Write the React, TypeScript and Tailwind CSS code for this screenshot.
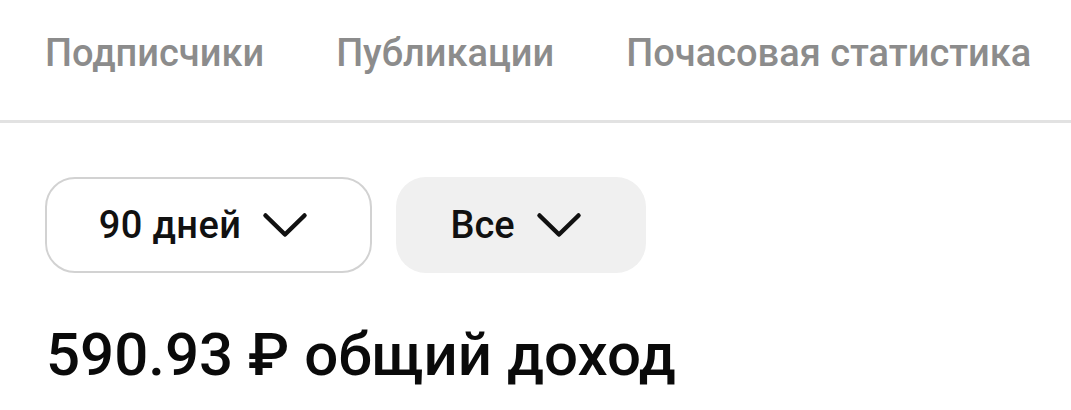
import React from "react";

function Chevron() {
  return (
    <svg width="46" height="26" viewBox="0 0 46 26" fill="none" className="shrink-0">
      <path d="M3.5 3.5 L23 22.5 L42.5 3.5" stroke="#111" strokeWidth="4.5" strokeLinecap="round" strokeLinejoin="round" />
    </svg>
  );
}

export default function App() {
  return (
    <div className="w-[1071px] h-[410px] bg-white overflow-hidden" style={{ fontFamily: "Roboto, 'Noto Sans', sans-serif" }}>
      <div className="flex items-start gap-[72px] pl-[45px] pt-[34px] h-[123px] border-b-[3px] border-[#e2e2e2]">
        <span className="text-[38px] font-medium text-[#8c8c8c] leading-none">Подписчики</span>
        <span className="text-[38px] font-medium text-[#8c8c8c] leading-none">Публикации</span>
        <span className="text-[38px] font-medium text-[#8c8c8c] leading-none">Почасовая статистика</span>
      </div>
      <div className="flex gap-[24px] pl-[45px] mt-[54px]">
        <div className="flex items-center justify-center gap-[21px] pr-[10px] w-[327px] h-[96px] rounded-[30px] border-2 border-[#d2d2d2] bg-white">
          <span className="text-[38px] font-medium text-[#111] leading-none tracking-[0.4px]">90 дней</span>
          <Chevron />
        </div>
        <div className="flex items-center justify-center gap-[21px] pr-[10px] w-[250px] h-[96px] rounded-[30px] bg-[#f0f0f0]">
          <span className="text-[38px] font-medium text-[#111] leading-none">Все</span>
          <Chevron />
        </div>
      </div>
      <div className="pl-[46px] mt-[52px] text-[60px] font-medium text-[#0a0a0a] leading-none">590.93 ₽ общий доход</div>
    </div>
  );
}
